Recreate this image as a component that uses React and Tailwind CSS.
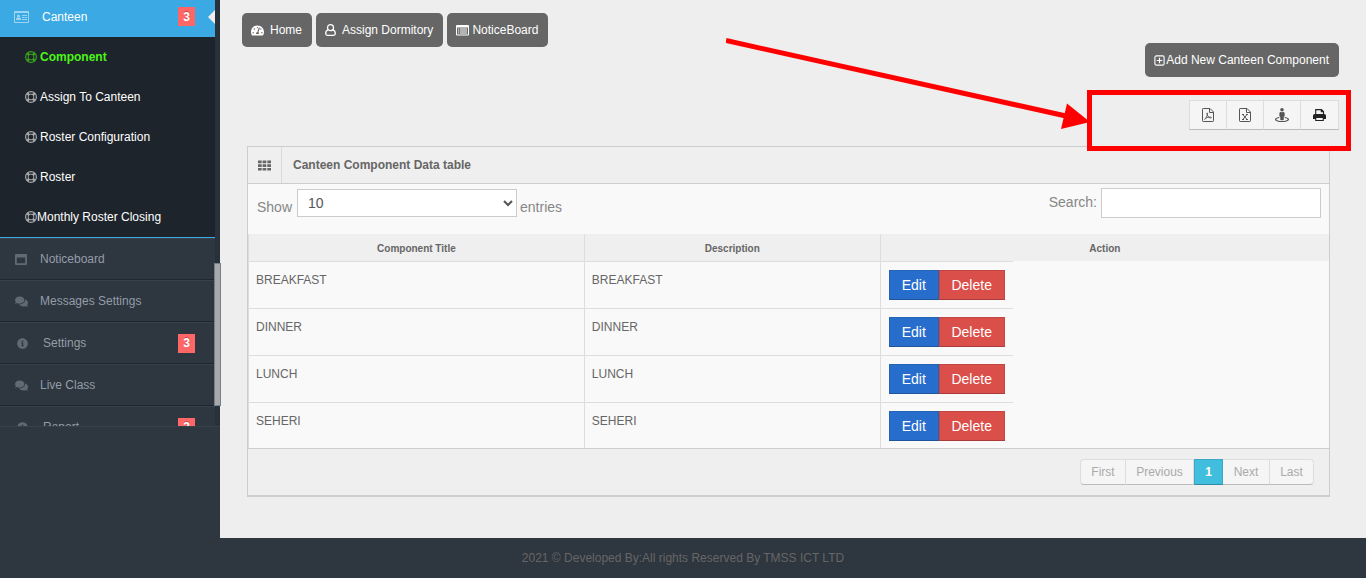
import React from "react";
import { FaComments, FaInfoCircle, FaTachometerAlt, FaStreetView } from "react-icons/fa";

const subItems = [
  { label: "Component", active: true },
  { label: "Assign To Canteen" },
  { label: "Roster Configuration" },
  { label: "Roster" },
  { label: "Monthly Roster Closing", tight: true },
];

const menuItems = [
  { label: "Noticeboard", icon: "window" },
  { label: "Messages Settings", icon: "chat" },
  { label: "Settings", icon: "info", badge: 3 },
  { label: "Live Class", icon: "chat" },
  { label: "Report", icon: "info", badge: 3 },
];

const rows = ["BREAKFAST", "DINNER", "LUNCH", "SEHERI"];

function LifeRingIcon() {
  return (
    <svg viewBox="0 0 12 12" className="size-3 opacity-60" fill="none" stroke="currentColor" aria-hidden="true">
      <circle cx="6" cy="6" r="5.4" strokeWidth="1.2" />
      <circle cx="6" cy="6" r="2.9" strokeWidth="1" />
      <path strokeWidth="2.4" d="M2.200 2.200l1.900 1.900M9.800 2.200L7.900 4.100M2.200 9.800l1.900-1.900M9.800 9.800L7.900 7.900" />
    </svg>
  );
}

function CardIcon() {
  return (
    <svg viewBox="0 0 15 12" className="h-3 w-[15px] opacity-50" fill="currentColor" aria-hidden="true">
      <path fillRule="evenodd" d="M1 0h13a1 1 0 0 1 1 1v10a1 1 0 0 1-1 1H1a1 1 0 0 1-1-1V1a1 1 0 0 1 1-1zm0 2v9h13V2z" />
      <circle cx="4.500" cy="5" r="1.500" />
      <path d="M2 9V7.800C2 7 2.700 6.400 3.500 6.400h2C6.300 6.400 7 7 7 7.800V9zM8 4h5v1H8zM8 6h2.500v1H8zM11 6h2v1h-2zM8 8h5v1H8z" />
    </svg>
  );
}

function ListIcon() {
  return (
    <svg viewBox="0 0 13 11" className="mr-[3px] h-[11px] w-[13px]" fill="currentColor" aria-hidden="true">
      <path fillRule="evenodd" d="M1 0h11a1 1 0 0 1 1 1v8.500a1 1 0 0 1-1 1H1a1 1 0 0 1-1-1V1a1 1 0 0 1 1-1zm0 2.600v6.900h11V2.600z" />
      <path d="M2 3.600h1.200v1H2zM4 3.600h7v1H4zM2 5.500h1.200v1H2zM4 5.500h7v1H4zM2 7.400h1.200v1H2zM4 7.400h7v1H4z" />
    </svg>
  );
}

function PlusSquareIcon() {
  return (
    <svg viewBox="0 0 11 11" className="mr-px size-[11px]" fill="none" stroke="currentColor" aria-hidden="true">
      <rect x=".9" y=".9" width="9.200" height="9.200" rx="1.400" strokeWidth="1.100" />
      <path d="M5.500 2.700v5.600M2.700 5.500h5.600" strokeWidth="1.200" />
    </svg>
  );
}

function WindowIcon() {
  return (
    <svg viewBox="0 0 12 11" className="h-[11px] w-3" fill="currentColor" aria-hidden="true">
      <path fillRule="evenodd" d="M1 0h10a1 1 0 0 1 1 1v9a1 1 0 0 1-1 1H1a1 1 0 0 1-1-1V1a1 1 0 0 1 1-1zm.8 3.500v5.700h8.400V3.500z" />
    </svg>
  );
}

function UserIcon() {
  return (
    <svg viewBox="0 0 11 12" className="h-3 w-[11px]" fill="none" stroke="currentColor" strokeWidth="1.3" aria-hidden="true">
      <circle cx="5.500" cy="3.700" r="3" />
      <path d="M3.100 5.800C1.400 6.200.7 7.800.7 9.500c0 1.200.8 1.800 1.800 1.800h6c1 0 1.800-.6 1.800-1.800 0-1.700-.7-3.300-2.400-3.700" />
    </svg>
  );
}

function FileIcon({ kind }) {
  return (
    <svg viewBox="0 0 12 14" className="h-[14px] w-3" fill="none" stroke="currentColor" aria-hidden="true">
      <path d="M1.200.5H8L11.500 4v8.800a.7.7 0 0 1-.7.7H1.200a.7.7 0 0 1-.7-.7V1.200a.7.7 0 0 1 .7-.7z" />
      <path d="M7.500.8v3.700h3.800" />
      {kind === "pdf" ? (
        <path strokeWidth=".9" d="M2.300 11.600c1.600-.8 3-3.500 3.300-6.100.1-.8-.9-.8-.8 0 .3 2.200 1.900 4.100 3.900 4.500.9.100 1-.8 0-.9-2-.1-4 .5-5.500 1.200" />
      ) : (
        <path d="M3.800 6.500l4.200 5M8 6.500l-4.200 5M3 6.500h2M7 6.500h2M3 11.500h2M7 11.500h2" />
      )}
    </svg>
  );
}

function PrintIcon() {
  return (
    <svg viewBox="0 0 13 12" className="h-3 w-[13px]" aria-hidden="true">
      <path fill="none" stroke="currentColor" strokeWidth="1.100" d="M2.700 6V.6h5.800l2 2V6M8.300.6v2.200h2.200" />
      <path fill="currentColor" fillRule="evenodd" d="M1.800 5h9.400A1.800 1.800 0 0 1 13 6.800v3.100h-2.200V12H2.200V9.900H0V6.800A1.800 1.800 0 0 1 1.800 5zm1.500 4v2h6.400V9z" />
    </svg>
  );
}

function GridIcon() {
  return (
    <svg viewBox="0 0 13 11" className="h-[11px] w-[13px]" fill="currentColor" aria-hidden="true">
      <path d="M0 .5h3.700v2.700H0zM4.600.5h3.700v2.700H4.600zM9.300.5H13v2.700H9.300zM0 4.200h3.700v2.700H0zM4.600 4.200h3.700v2.700H4.600zM9.300 4.200H13v2.700H9.300zM0 7.900h3.700v2.700H0zM4.600 7.900h3.700v2.700H4.600zM9.300 7.900H13v2.700H9.300z" />
    </svg>
  );
}

function MenuIcon({ name }) {
  if (name === "window") return <WindowIcon />;
  if (name === "chat") return <FaComments className="size-[13px]" />;
  return <FaInfoCircle className="size-[11px]" />;
}

function Badge({ children }) {
  return (
    <span className="ml-auto mr-5 flex h-[19px] w-[17px] items-center justify-center bg-[#ff6666] text-[12px] font-bold text-white [text-shadow:0_-1px_0_rgba(0,0,0,0.25)]">
      {children}
    </span>
  );
}

function Sidebar() {
  return (
    <aside className="w-[220px] shrink-0">
      <nav className="relative h-[427px] overflow-hidden border-b border-[#37414b] bg-[#28303a] pr-[5px]">
        <ul>
          <li className="relative">
            <a href="#canteen" className="flex h-[37px] items-center bg-[#3ba9e4] pb-1 pl-[14px] text-white">
              <CardIcon />
              <span className="ml-[13px]">Canteen</span>
              <Badge>3</Badge>
            </a>
            <svg viewBox="0 0 7 14" className="absolute right-0 top-[10px] h-[14px] w-[7px]" aria-hidden="true">
              <path d="M7 0v14L0 7z" fill="#eeeeee" />
            </svg>
            <ul className="border-b border-[#3ba9e4] bg-[#1e242b]">
              {subItems.map((item) => (
                <li key={item.label}>
                  <a
                    href="#canteen-item"
                    className={`flex h-10 items-center pl-[25px] ${item.active ? "font-bold text-[#4bf516]" : "text-white"}`}
                  >
                    <LifeRingIcon />
                    <span className={item.tight ? "" : "ml-[3px]"}>{item.label}</span>
                  </a>
                </li>
              ))}
            </ul>
          </li>
          {menuItems.map((item) => (
            <li key={item.label} className="border-b border-t border-b-[#1f262d] border-t-[#37414b] bg-[#2e363f]">
              <a href="#menu-item" className={`flex h-10 items-center text-[#939da8] ${item.badge ? "pl-[17px]" : "pl-[15px]"}`}>
                <span className="w-[11px] text-[#616973]">
                  <MenuIcon name={item.icon} />
                </span>
                <span className={item.badge ? "ml-[15px]" : "ml-[14px]"}>{item.label}</span>
                {item.badge && <Badge>{item.badge}</Badge>}
              </a>
            </li>
          ))}
        </ul>
      </nav>
    </aside>
  );
}

const topButton =
  "flex h-[34px] items-center rounded-[5px] bg-[#666666] pl-[9px] pr-[10px] text-[12px] text-white";
const toolButton =
  "flex h-[30px] w-[37px] items-center justify-center border-r border-[#dddddd] border-b border-b-[#bbbbbb] border-t bg-[#f5f5f5] first:w-[38px] first:border-l last:w-[38px]";
const pageButton =
  "h-[26px] border-y border-r border-[#dddddd] border-b-[#bbbbbb] bg-[#f5f5f5] text-[12px] leading-6 text-[#aaaaaa]";

function DataPanel() {
  return (
    <section className="ml-[27px] mr-9 mt-4 border border-b-2 border-[#cdcdcd] bg-[#f9f9f9]">
      <header className="flex h-[37px] items-stretch border-b border-[#cdcdcd] bg-[#efefef] text-[#666666]">
        <span className="flex w-[34px] items-center justify-center border-r border-[#dadada]">
          <GridIcon />
        </span>
        <h5 className="pl-[11px] text-[12px] font-bold leading-9">Canteen Component Data table</h5>
      </header>
      <div className="flex h-[50px] items-start justify-between pl-[9px] pr-2 pt-1 text-[14px] text-[#878787]">
        <label className="flex items-start">
          <span className="pt-[9px] leading-5">Show</span>
          <select
            className="ml-[5px] mr-[3px] mt-px h-7 w-[220px] border border-[#cccccc] bg-white pl-[6px] text-[14px] text-[#555555]"
            defaultValue="10"
          >
            <option>10</option>
            <option>25</option>
            <option>50</option>
          </select>
          <span className="pt-[9px] leading-5">entries</span>
        </label>
        <label className="flex items-start">
          <span className="pt-1 leading-5">Search:</span>
          <input type="text" className="ml-1 h-[30px] w-[220px] border border-[#cccccc] bg-white px-2 outline-none" />
        </label>
      </div>
      <table className="w-full table-fixed border-separate border-spacing-0 border-l border-[#dddddd] text-[12px] text-[#666666]">
        <colgroup>
          <col className="w-[31%]" />
          <col className="w-[27.4%]" />
          <col />
        </colgroup>
        <thead>
          <tr className="h-[27px] bg-[#efefef] text-[10px]">
            <th className="p-0 pt-[2px]">Component Title</th>
            <th className="border-l border-[#dddddd] p-0 pt-[2px]">Description</th>
            <th className="border-l border-[#dddddd] p-0 pt-[2px]">Action</th>
          </tr>
        </thead>
        <tbody>
          {rows.map((name) => (
            <tr key={name} className="group align-top">
              <td className="border-t border-[#dddddd] px-[7px] py-2 leading-5">{name}</td>
              <td className="border-l border-t border-[#dddddd] px-[7px] py-2 leading-5">{name}</td>
              <td className="border-l border-[#dddddd] p-0">
                <div className="flex w-[132px] border-t border-[#dddddd] p-2 text-[14px] text-white [text-shadow:0_-1px_0_rgba(0,0,0,0.25)] group-last:pb-[7px]">
                  <button type="button" className="h-[30px] w-[50px] border border-[#2563b4] border-b-[#1f559c] bg-[#266dcc]">
                    Edit
                  </button>
                  <button type="button" className="h-[30px] w-[66px] border border-[#c24743] border-b-[#a93b38] bg-[#da4f49]">
                    Delete
                  </button>
                </div>
              </td>
            </tr>
          ))}
        </tbody>
      </table>
      <div className="flex h-[47px] justify-end border-t border-[#cdcdcd] bg-[#efefef] pr-[15px] pt-[10px]">
        <button type="button" className={`${pageButton} w-[46px] rounded-l-[4px] border-l`}>First</button>
        <button type="button" className={`${pageButton} w-[68px]`}>Previous</button>
        <button type="button" className="h-[26px] w-[29px] border border-[#3aa9c6] border-b-[#2f8ca5] bg-[#41bedd] text-[12px] font-bold leading-6 text-white">
          1
        </button>
        <button type="button" className={`${pageButton} w-[47px]`}>Next</button>
        <button type="button" className={`${pageButton} w-11 rounded-r-[4px]`}>Last</button>
      </div>
    </section>
  );
}

export default function App() {
  return (
    <div className="relative flex min-h-screen flex-col bg-[#2e363f] font-['Liberation_Sans',Arial,sans-serif] text-[12px]">
      <div className="flex flex-1">
        <Sidebar />
        <main className="min-w-0 flex-1 bg-[#eeeeee] pb-10">
          <div className="flex gap-1 pl-[22px] pt-[13px]">
            <a href="#home" className={topButton}>
              <FaTachometerAlt className="mr-[6px] size-[13px]" />
              Home
            </a>
            <a href="#dormitory" className={topButton}>
              <UserIcon />
              <span className="ml-[6px]">Assign Dormitory</span>
            </a>
            <a href="#noticeboard" className={topButton}>
              <ListIcon />
              NoticeBoard
            </a>
          </div>
          <div className="-mt-1 flex justify-end pr-[27px]">
            <a href="#add" className={topButton}>
              <PlusSquareIcon />
              Add New Canteen Component
            </a>
          </div>
          <div className="mt-[23px] flex justify-end pr-[27px] text-[#555555]">
            <button type="button" aria-label="Export PDF" className={toolButton}><FileIcon kind="pdf" /></button>
            <button type="button" aria-label="Export Excel" className={toolButton}><FileIcon kind="excel" /></button>
            <button type="button" aria-label="Export CSV" className={toolButton}><FaStreetView className="size-[14px]" /></button>
            <button type="button" aria-label="Print" className={`${toolButton} text-[#222222]`}><PrintIcon /></button>
          </div>
          <DataPanel />
        </main>
      </div>
      <footer className="flex h-10 items-center justify-center text-[#666666]">
        2021 © Developed By:All rights Reserved By TMSS ICT LTD
      </footer>
      <div className="absolute left-[214px] top-[263px] h-[143px] w-[7px] border border-[#708090] bg-[#a9a9a9]" />
      <svg viewBox="0 0 640 130" className="pointer-events-none absolute right-0 top-[30px] h-[130px] w-[640px]" aria-hidden="true">
        <path d="M0 10.500L340 86" stroke="#ff0000" strokeWidth="5" />
        <path d="M341 73.500L364 92l-29 7z" fill="#ff0000" />
        <rect x="363.500" y="62.500" width="259" height="56" fill="none" stroke="#ff0000" strokeWidth="5" />
      </svg>
    </div>
  );
}
